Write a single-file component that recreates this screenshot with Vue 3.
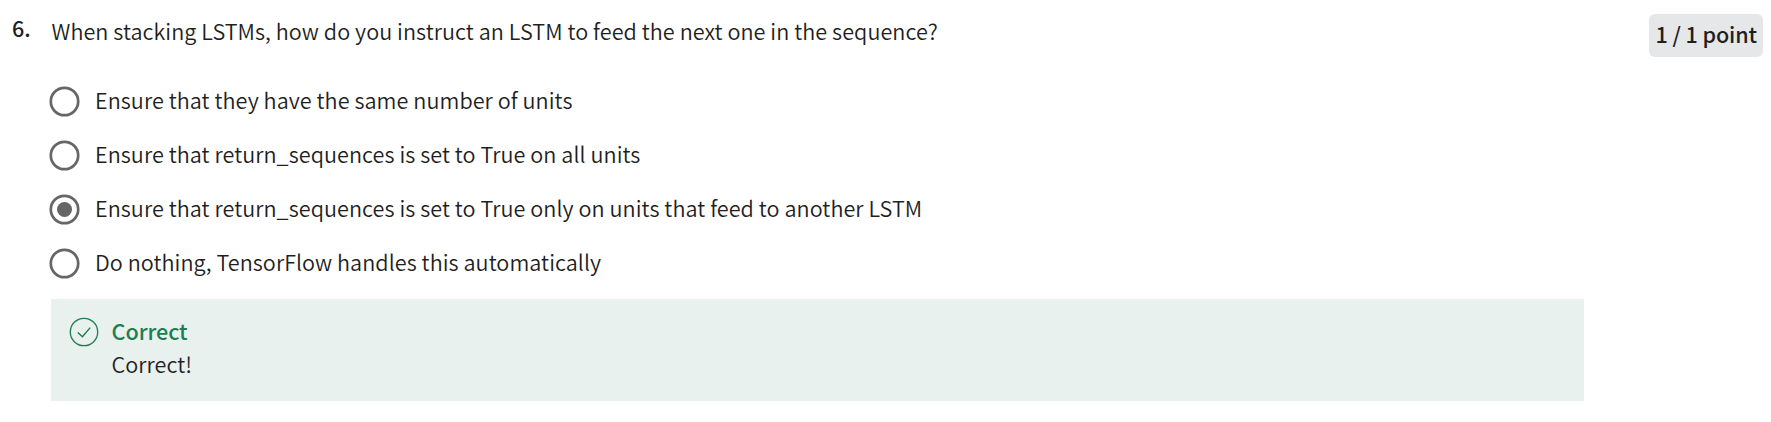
<script setup>
const options = [
  { text: 'Ensure that they have the same number of units', checked: false },
  { text: 'Ensure that return_sequences is set to True on all units', checked: false },
  { text: 'Ensure that return_sequences is set to True only on units that feed to another LSTM', checked: true },
  { text: 'Do nothing, TensorFlow handles this automatically', checked: false },
]
</script>

<template>
  <main class="quiz">
    <div class="number"><span>6.</span></div>
    <section class="body">
      <h1 class="prompt"><span>When stacking LSTMs, how do you instruct an LSTM to feed the next one in the sequence?</span></h1>
      <div class="options">
        <label v-for="option in options" :key="option.text" class="option">
          <svg class="radio" width="31" height="31" viewBox="0 0 31 31">
            <circle cx="15.5" cy="15.5" r="13.7" fill="none" stroke="#666" stroke-width="2.7" />
            <circle v-if="option.checked" cx="15.5" cy="15.5" r="7.5" fill="#666" />
          </svg>
          <span>{{ option.text }}</span>
        </label>
      </div>
      <div class="feedback">
        <svg class="check" width="30" height="30" viewBox="0 0 30 30" fill="none" stroke="#1d7c50">
          <circle cx="15" cy="15" r="13.7" stroke-width="1.3" />
          <path d="M8.8 15.4 13.4 19.8 21.2 10.6" stroke-width="1.4" />
        </svg>
        <div class="message">
          <div class="verdict"><span>Correct</span></div>
          <div class="detail"><span>Correct!</span></div>
        </div>
      </div>
    </section>
    <div class="points"><span>1 / 1 point</span></div>
  </main>
</template>

<style>
body {
  background: #fff;
}
</style>

<style scoped>
.quiz {
  box-sizing: border-box;
  height: 422px;
  display: flex;
  align-items: flex-start;
  padding: 14px 8px 0 12px;
  color: #1f1f1f;
  font-family: "Noto Sans CJK SC", "Open Sans", sans-serif;
  font-size: 21.6px;
  font-weight: 350;
  line-height: 32px;
  letter-spacing: 0.055px;
  white-space: nowrap;
}
.number {
  width: 39px;
  margin-top: -2px;
  font-weight: 500;
}
.body {
  width: 1533px;
}
.prompt {
  margin: 0;
  padding: 1px 0 0 0.5px;
  font-size: inherit;
  font-weight: inherit;
}
.options {
  margin: 27px 0 0 -2px;
}
.option {
  height: 54px;
  display: flex;
  align-items: center;
  gap: 15px;
}
.option span {
  padding-bottom: 2px;
}
.feedback {
  box-sizing: border-box;
  height: 102px;
  margin-top: 9px;
  display: flex;
  gap: 12.5px;
  padding: 16px 18px;
  background: #e8f1ee;
}
.check {
  margin-top: 2px;
}
.verdict {
  color: #1d7c50;
  font-weight: 500;
  letter-spacing: -0.05px;
}
.detail {
  margin-top: 1px;
}
.points {
  box-sizing: border-box;
  width: 114px;
  height: 43px;
  margin-left: auto;
  padding: 4px 0 0 6.5px;
  border-radius: 6px;
  background: #e5e7e8;
  font-weight: 500;
  letter-spacing: -0.12px;
}
</style>
